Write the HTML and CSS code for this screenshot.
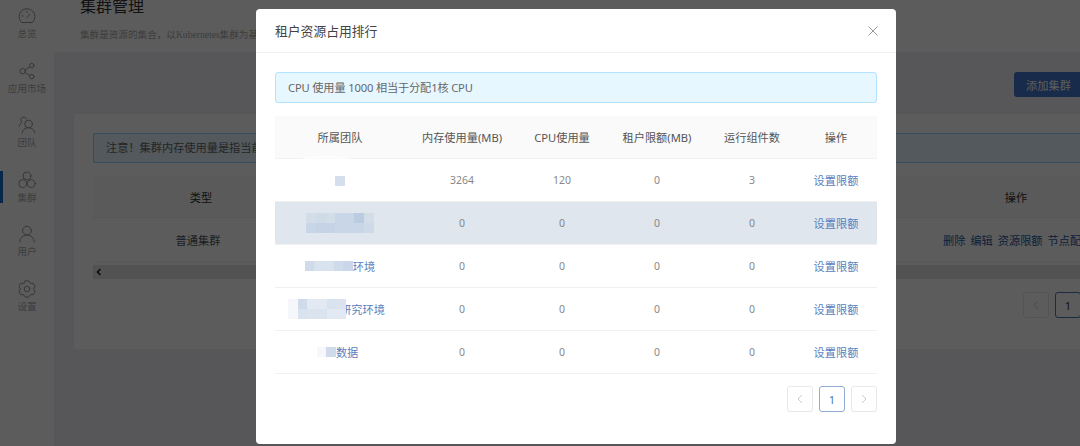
FILE: index.html
```html
<!DOCTYPE html>
<html lang="zh-CN">
<head>
    <meta charset="UTF-8">
    <title>集群管理</title>
    <link rel="stylesheet" href="styles.css">
</head>
<body>
    <div class="page">
        <aside class="sidebar">
            <div class="navItem">
                <svg viewBox="0 0 18 18"><path d="M3.2 15.2a8 8 0 1 1 11.6 0z"/><path d="M9 10.5l3-3.5M4 9h1.2M9 4v1.2"/></svg>
                <span>总览</span>
            </div>
            <div class="navItem">
                <svg viewBox="0 0 18 18"><circle cx="4.6" cy="9.2" r="2.7"/><circle cx="13.8" cy="3.6" r="2.2"/><circle cx="13.8" cy="14.6" r="2.2"/><path d="M7 7.8l5-3M7 10.6l5 2.9"/></svg>
                <span>应用市场</span>
            </div>
            <div class="navItem">
                <svg viewBox="0 0 18 18"><circle cx="10.5" cy="8" r="3.8"/><path d="M4.2 17c.4-3.2 3-5.3 6.3-5.3s5.900 2.100 6.300 5.300"/><path d="M8.800 2.900A4 4 0 0 0 4 1.500C2.500 2.500 2.600 4.800 3.800 6.200 2.500 7.200 1.500 8.700 1 10.500"/></svg>
                <span>团队</span>
            </div>
            <div class="navItem active">
                <svg viewBox="0 0 18 18"><circle cx="9" cy="4.900" r="4"/><circle cx="4.800" cy="12.600" r="4"/><circle cx="13.200" cy="12.600" r="4"/></svg>
                <span>集群</span>
            </div>
            <div class="navItem">
                <svg viewBox="0 0 18 18"><circle cx="9" cy="5.600" r="4.400"/><path d="M1.800 17.200c0-4 3.200-7.200 7.200-7.200s7.200 3.200 7.200 7.200"/></svg>
                <span>用户</span>
            </div>
            <div class="navItem">
                <svg viewBox="0 0 18 18"><polygon points="7.300,0.900 10.700,0.900 12.300,3.300 15.340,3.380 17.040,6.320 15.600,9 17.040,11.680 15.340,14.620 12.300,14.700 10.700,17.100 7.300,17.100 5.700,14.700 2.660,14.620 0.960,11.680 2.400,9 0.960,6.320 2.660,3.380 5.700,3.300"/><circle cx="9" cy="9" r="2.800"/></svg>
                <span>设置</span>
            </div>
        </aside>

        <main class="main">
            <header class="pageHead">
                <h1>集群管理</h1>
                <p>集群是资源的集合，以Kubernetes集群为基</p>
            </header>
            <section class="content">
                <div class="toolbar">
                    <button class="addBtn">添加集群</button>
                </div>
                <div class="card">
                    <div class="notice">注意！集群内存使用量是指当前</div>
                    <div class="clusterRow clusterHead">
                        <div class="typeCol">类型</div>
                        <div class="actionCol">操作</div>
                    </div>
                    <div class="clusterRow">
                        <div class="typeCol typeValue">普通集群</div>
                        <div class="actionCol links">
                            <a>删除</a><a>编辑</a><a>资源限额</a><a>节点配</a>
                        </div>
                    </div>
                    <div class="scrollTrack">
                        <svg viewBox="0 0 6 8"><path d="M4.500 1L1.500 4l3 3"/></svg>
                    </div>
                    <div class="pager backPager">
                        <span class="pageBtn disabled"><svg viewBox="0 0 10 10"><path d="M7 1L3 5l4 4"/></svg></span>
                        <span class="pageBtn current">1</span>
                    </div>
                </div>
            </section>
        </main>
    </div>

    <div class="mask"></div>

    <div class="modal">
        <div class="modalHead">
            <span class="modalTitle">租户资源占用排行</span>
            <svg class="closeIcon" viewBox="0 0 10 10"><path d="M0.500 0.500l9 9M9.500 0.500l-9 9"/></svg>
        </div>
        <div class="modalBody">
            <div class="tip">CPU 使用量 1000 相当于分配1核 CPU</div>
            <table class="rankTable">
                <thead>
                    <tr>
                        <th class="colTeam">所属团队</th>
                        <th class="colMem">内存使用量(MB)</th>
                        <th class="colCpu">CPU使用量</th>
                        <th class="colLimit">租户限额(MB)</th>
                        <th class="colCount">运行组件数</th>
                        <th>操作</th>
                    </tr>
                </thead>
                <tbody>
                    <tr>
                        <td class="team smudge"><span class="teamCell"><span class="mosaic one"><i class="m4"></i></span></span></td>
                        <td>3264</td><td>120</td><td>0</td><td>3</td><td><a>设置限额</a></td>
                    </tr>
                    <tr class="picked">
                        <td class="team">
                            <span class="teamCell">
                                <span class="mosaic two">
                                    <i class="h1"></i><i class="h4"></i>
                                    <i class="h3"></i><i class="h5"></i>
                                    <i class="h1"></i><i class="h5"></i>
                                    <i class="h4"></i><i class="h4"></i>
                                    <i class="h4"></i><i class="h4"></i>
                                    <i class="h6"></i><i class="h4"></i>
                                    <i class="h1"></i><i class="h2"></i>
                                </span>
                            </span>
                        </td>
                        <td>0</td><td>0</td><td>0</td><td>0</td><td><a>设置限额</a></td>
                    </tr>
                    <tr>
                        <td class="team">
                            <span class="teamCell">
                                <span class="mosaic one">
                                    <i class="m2"></i><i class="m3"></i><i class="m3"></i><i class="m2"></i><i class="m1"></i>
                                </span>
                                <a>环境</a>
                            </span>
                        </td>
                        <td>0</td><td>0</td><td>0</td><td>0</td><td><a>设置限额</a></td>
                    </tr>
                    <tr>
                        <td class="team shiftWide">
                            <span class="teamCell">
                                <span class="mosaic two overText">
                                    <i class="p1"></i><i class="p1"></i>
                                    <i class="m2"></i><i class="m3"></i>
                                    <i class="p2"></i><i class="p3"></i>
                                    <i class="p2"></i><i class="p3"></i>
                                    <i class="m3"></i><i class="p2"></i>
                                    <i class="p3"></i><i class="p2"></i>
                                </span>
                                <a>研究环境</a>
                            </span>
                        </td>
                        <td>0</td><td>0</td><td>0</td><td>0</td><td><a>设置限额</a></td>
                    </tr>
                    <tr>
                        <td class="team shiftNarrow">
                            <span class="teamCell">
                                <span class="mosaic one"><i class="p1"></i><i class="m2"></i></span>
                                <a>数据</a>
                            </span>
                        </td>
                        <td>0</td><td>0</td><td>0</td><td>0</td><td><a>设置限额</a></td>
                    </tr>
                </tbody>
            </table>
            <div class="pager">
                <span class="pageBtn disabled"><svg viewBox="0 0 10 10"><path d="M7 1L3 5l4 4"/></svg></span>
                <span class="pageBtn current">1</span>
                <span class="pageBtn disabled"><svg viewBox="0 0 10 10"><path d="M3 1l4 4-4 4"/></svg></span>
            </div>
        </div>
    </div>
</body>
</html>
```

FILE: styles.css
```css
*{
    margin: 0;
    padding: 0;
    box-sizing: border-box;
}

html, body{
    height: 100%;
    overflow: hidden;
    background: #fff;
    font-family: "Noto Sans", "Noto Sans CJK SC", sans-serif;
    font-size: 11.2px;
    color: #666;
}

.page{
    display: flex;
    width: 1080px;
    height: 446px;
    overflow: hidden;
}

/* left nav */
.sidebar{
    width: 54px;
    flex-shrink: 0;
    background: #fff;
}

.navItem{
    position: relative;
    height: 54.5px;
    padding-top: 7px;
    display: flex;
    flex-direction: column;
    align-items: center;
    gap: 2px;
    font-size: 9.6px;
    line-height: 14px;
    color: #aaa;
}

.navItem svg{
    width: 18px;
    height: 18px;
    fill: none;
    stroke: #999;
    stroke-width: 1;
    stroke-linejoin: round;
    stroke-linecap: round;
}

.navItem.active::before{
    content: "";
    position: absolute;
    left: 0;
    top: 7px;
    width: 3px;
    height: 32px;
    background: #0f6fd0;
}

/* page behind the modal */
.main{
    flex: 1;
    min-width: 0;
}

.pageHead{
    display: flow-root;
    height: 52px;
    padding-left: 26px;
    background: #fff;
}

.pageHead h1{
    margin-top: -6px;
    font-size: 16px;
    line-height: 24px;
    font-weight: 400;
    color: #333;
}

.pageHead p{
    margin-top: 10px;
    font-family: "Liberation Serif", "Noto Sans CJK SC", serif;
    font-size: 9.6px;
    line-height: 14px;
    color: #aaa;
    white-space: nowrap;
}

.content{
    height: 394px;
    padding: 20px 0 0 20px;
    background: #f0f2f5;
}

.toolbar{
    height: 42px;
    padding-left: 940px;
    white-space: nowrap;
}

.addBtn{
    width: 69px;
    height: 25px;
    border: 0;
    border-radius: 3px;
    background: #4478cc;
    color: #fff;
    font-family: inherit;
    font-size: 11.2px;
}

.card{
    height: 235px;
    padding: 19px 0 0 19px;
    background: #fff;
    overflow: hidden;
}

.notice{
    height: 30px;
    line-height: 28px;
    padding-left: 12px;
    border: 1px solid #91d5ff;
    border-right: 0;
    border-radius: 3px 0 0 3px;
    background: #e6f7ff;
    white-space: nowrap;
}

.clusterRow{
    display: flex;
    height: 44px;
    align-items: center;
    color: #555;
    border-bottom: 1px solid #f0f0f0;
    white-space: nowrap;
}

.clusterHead{
    margin-top: 13px;
    height: 42px;
    background: #fafafa;
    color: #333;
}

.typeCol{
    width: 216px;
    text-align: center;
    flex-shrink: 0;
}

.typeValue{
    padding-right: 6px;
}

.actionCol{
    margin-left: 634px;
    width: 146px;
    flex-shrink: 0;
    text-align: center;
}

.links{
    display: flex;
    gap: 5px;
}

.links a{
    color: #2c5aa0;
}

.scrollTrack{
    height: 14px;
    margin-top: 3px;
    padding-left: 3px;
    background: #e4e4e4;
    display: flex;
    align-items: center;
}

.scrollTrack svg{
    width: 6px;
    height: 8px;
    fill: none;
    stroke: #222;
    stroke-width: 1.6;
}

/* dark layer */
.mask{
    position: fixed;
    inset: 0;
    background: rgba(0, 0, 0, .64);
}

/* modal */
.modal{
    position: absolute;
    left: 256px;
    top: 9px;
    width: 640px;
    height: 435px;
    background: #fff;
    border-radius: 4px;
}

.modalHead{
    height: 44px;
    padding: 0 19px;
    display: flex;
    align-items: center;
    justify-content: space-between;
    border-bottom: 1px solid #f0f0f0;
}

.modalTitle{
    font-size: 12.8px;
    color: #444;
}

.closeIcon{
    width: 10px;
    height: 10px;
    margin-right: -1px;
    fill: none;
    stroke: #999;
    stroke-width: 1;
}

.modalBody{
    padding: 19px 19px 0;
}

.tip{
    height: 31px;
    line-height: 29px;
    padding-left: 12px;
    border: 1px solid #b3e3ff;
    border-radius: 3px;
    background: #e6f7ff;
    color: #666;
    letter-spacing: -.15px;
    white-space: nowrap;
}

.rankTable{
    width: 602px;
    margin-top: 13px;
    border-collapse: separate;
    border-spacing: 0;
    table-layout: fixed;
}

.rankTable th{
    height: 43px;
    background: #fafafa;
    font-weight: 400;
    color: #555;
    border-bottom: 1px solid #f2f2f2;
}

.rankTable td{
    height: 43px;
    text-align: center;
    font-size: 10.5px;
    color: #888;
    border-bottom: 1px solid #f0f0f0;
}

.colTeam{ width: 130px; }
.colMem{ width: 114px; }
.colCpu{ width: 86px; }
.colLimit{ width: 104px; }
.colCount{ width: 86px; }

.rankTable a{
    font-size: 11.2px;
    color: #5b80bd;
}

.picked td{
    background: #dfe6ee;
}

.team{
    position: relative;
}

.teamCell{
    display: inline-flex;
    align-items: center;
    vertical-align: middle;
}

.shiftWide{
    padding-right: 7px;
}

.shiftNarrow{
    padding-right: 5px;
}

/* smudged-out team names */
.mosaic{
    display: inline-grid;
    grid-auto-flow: column;
}

.mosaic i{
    display: block;
    width: 9.6px;
    height: 10px;
}

.mosaic.one{
    grid-template-rows: 10px;
}

.mosaic.two{
    grid-template-rows: 10px 10px;
}

.overText{
    position: relative;
    margin-right: -5.6px;
    z-index: 1;
}

.smudge::before{
    content: "";
    position: absolute;
    left: 28px;
    top: -3px;
    width: 48px;
    height: 4px;
    border-radius: 50%;
    background: rgba(255, 255, 255, .6);
}

.m1{ background: #cad7ea; }
.m2{ background: #cfdaeb; }
.m3{ background: #d9e2ef; }
.m4{ background: #d5deec; }
.h1{ background: #d2dde8; }
.h2{ background: #cfdae8; }
.h3{ background: #cfdbe7; }
.h4{ background: #c9d6e7; }
.h5{ background: #c6d3e6; }
.h6{ background: #bccce0; }
.p1{ background: #f5f7fb; }
.p2{ background: #e3e9f3; }
.p3{ background: #dbe3ef; }

.pager{
    display: flex;
    justify-content: flex-end;
    gap: 6px;
    margin-top: 12px;
}

.backPager{
    justify-content: flex-start;
    margin-top: 13px;
    padding-left: 930px;
}

.pageBtn{
    width: 26px;
    height: 26px;
    flex-shrink: 0;
    display: flex;
    align-items: center;
    justify-content: center;
    border: 1px solid #e8e8e8;
    border-radius: 3px;
    background: #fff;
    color: #4d77b8;
}

.pageBtn svg{
    width: 10px;
    height: 10px;
    fill: none;
    stroke: #ccc;
    stroke-width: 1;
}

.pageBtn.current{
    border-color: #8fabd6;
}

.backPager .current{
    border-color: #4d77b8;
    color: #333;
}
```
